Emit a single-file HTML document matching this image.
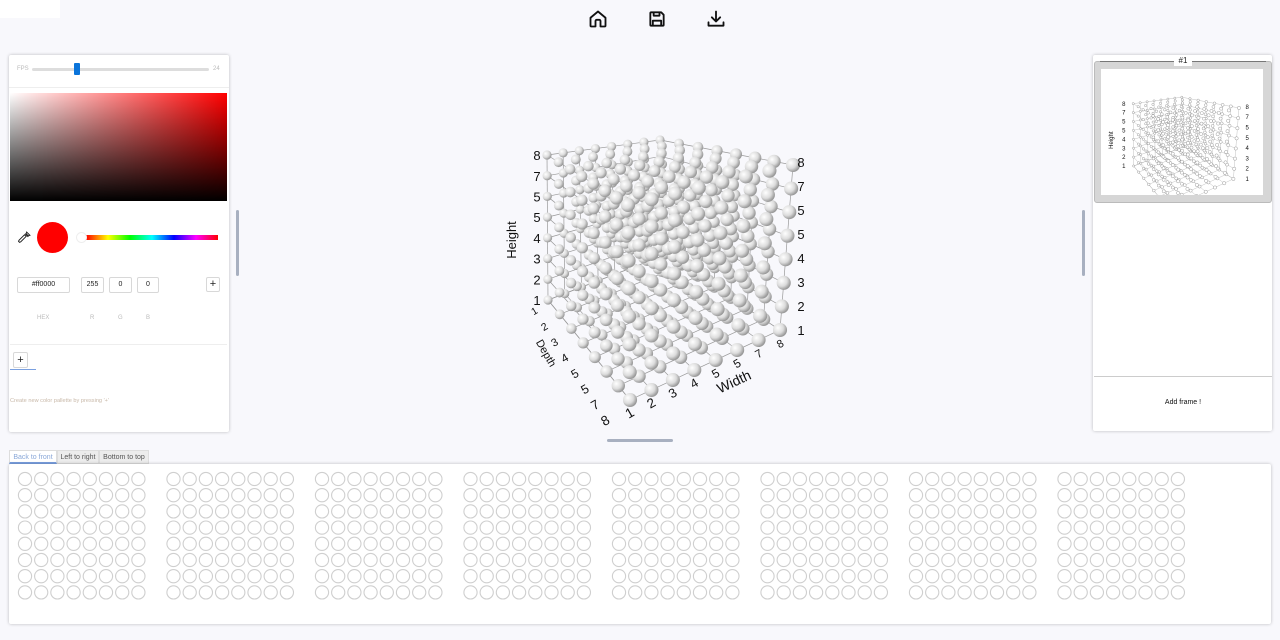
<!DOCTYPE html>
<html><head><meta charset="utf-8">
<style>
*{box-sizing:border-box;margin:0;padding:0}
body{width:1280px;height:640px;background:#f8f8fc;font-family:"Liberation Sans",sans-serif;position:relative;overflow:hidden}
.abs{position:absolute}
.panel{background:#fff;box-shadow:0 0 3px rgba(0,0,0,.25);border-radius:2px}
.inp{position:absolute;border:1px solid #d8d8d8;border-radius:2px;font-size:7px;color:#222;text-align:center;line-height:14px;height:16px;background:#fff}
.lbl{position:absolute;font-size:6px;color:#bbb}
.tab{position:absolute;top:450px;height:14px;font-size:7px;line-height:14px;color:#555;background:#ececec;border:1px solid #ddd;text-align:center}
</style></head><body>
<div class="abs" style="left:0;top:0;width:60px;height:18px;background:#fff"></div>

<svg class="abs" style="left:588px;top:9px" width="20" height="20" viewBox="0 0 24 24" fill="none" stroke="#111" stroke-width="2.2" stroke-linejoin="round"><path d="M3 10.5L12 3l9 7.5V20a1 1 0 0 1-1 1h-5v-6.5a1.5 1.5 0 0 0-1.5-1.5h-3A1.5 1.5 0 0 0 9 14.5V21H4a1 1 0 0 1-1-1z"/></svg>
<svg class="abs" style="left:647px;top:9px" width="20" height="20" viewBox="0 0 24 24" fill="none" stroke="#111" stroke-width="2.2" stroke-linejoin="round"><path d="M4 5a1 1 0 0 1 1-1h12l3 3v12a1 1 0 0 1-1 1H5a1 1 0 0 1-1-1z"/><path d="M8 4v4h7V4M7 20v-6h10v6"/></svg>
<svg class="abs" style="left:706px;top:9px" width="20" height="20" viewBox="0 0 24 24" fill="none" stroke="#111" stroke-width="2.2" stroke-linecap="round" stroke-linejoin="round"><path d="M12 3v12M7 10l5 5 5-5M3 16v4h18v-4"/></svg>

<div class="panel abs" style="left:9px;top:55px;width:220px;height:377px"></div>
<div class="lbl" style="left:17px;top:66px">FPS</div>
<div class="abs" style="left:32px;top:68px;width:177px;height:3px;background:#ddd;border-radius:2px"></div>
<div class="abs" style="left:74px;top:63px;width:6px;height:12px;background:#0a74da;border-radius:1px"></div>
<div class="lbl" style="left:213px;top:66px">24</div>
<div class="abs" style="left:9px;top:87px;width:220px;height:1px;background:#eee"></div>
<div class="abs" style="left:10px;top:93px;width:217px;height:108px;background:linear-gradient(to top,#000,rgba(0,0,0,0)),linear-gradient(to right,#fff,#f00)"></div>
<svg class="abs" style="left:18px;top:231px" width="13" height="13" viewBox="0 0 24 24" fill="none" stroke="#222" stroke-width="1.8"><path d="M3 21l2-1 10-10-3-3L2 17l-1 2zM13 5l6 6M16 2l6 6-3 1-4-4z"/></svg>
<div class="abs" style="left:37px;top:222px;width:31px;height:31px;border-radius:50%;background:#f00"></div>
<div class="abs" style="left:86px;top:235px;width:132px;height:5px;background:linear-gradient(to right,#f00,#ff0,#0f0,#0ff,#00f,#f0f,#f00)"></div>
<div class="abs" style="left:76px;top:232px;width:11px;height:11px;border-radius:50%;background:#fff;border:1px solid #eee"></div>
<div class="inp" style="left:17px;top:277px;width:53px">#ff0000</div>
<div class="inp" style="left:81px;top:277px;width:23px">255</div>
<div class="inp" style="left:109px;top:277px;width:23px">0</div>
<div class="inp" style="left:137px;top:277px;width:22px">0</div>
<div class="inp" style="left:206px;top:277px;width:14px;height:15px;font-size:11px;line-height:13px">+</div>
<div class="lbl" style="left:37px;top:315px">HEX</div>
<div class="lbl" style="left:90px;top:315px">R</div>
<div class="lbl" style="left:118px;top:315px">G</div>
<div class="lbl" style="left:146px;top:315px">B</div>
<div class="abs" style="left:10px;top:344px;width:217px;height:1px;background:#eee"></div>
<div class="inp" style="left:13px;top:352px;width:15px;font-size:11px;line-height:14px">+</div>
<div class="abs" style="left:10px;top:369px;width:26px;height:1px;background:#7aa0e0"></div>
<div class="abs" style="left:10px;top:398px;font-size:5.6px;color:#c8b8a8">Create new color pallette by pressing '+'</div>

<div class="abs" style="left:236px;top:210px;width:3px;height:66px;background:#a8b0c0;border-radius:2px"></div>
<div class="abs" style="left:1082px;top:210px;width:3px;height:66px;background:#a8b0c0;border-radius:2px"></div>
<div class="abs" style="left:607px;top:439px;width:66px;height:3px;background:#a8b0c0;border-radius:2px"></div>

<svg id="plot" class="abs" style="left:0;top:0" width="1280" height="640"></svg>

<div class="panel abs" style="left:1093px;top:55px;width:179px;height:376px"></div>
<div class="abs" style="left:1094px;top:61px;width:178px;height:142px;background:#d6d6d6;border:1px solid #bbb;border-radius:3px"></div>
<div class="abs" style="left:1100px;top:61px;width:166px;height:1px;background:#777"></div>
<div class="abs" style="left:1174px;top:56px;width:18px;height:10px;background:#fff;font-size:8px;text-align:center;line-height:10px;color:#222">#1</div>
<div class="abs" style="left:1101px;top:69px;width:162px;height:126px;background:#fff;overflow:hidden"><svg id="thumb" width="162" height="126"></svg></div>
<div class="abs" style="left:1094px;top:376px;width:178px;height:1px;background:#ccc"></div>
<div class="abs" style="left:1094px;top:399px;width:178px;text-align:center;font-size:7px;color:#111">Add frame !</div>

<div class="tab" style="left:9px;width:48px;background:#fff;color:#8aa8d8;border-bottom:2px solid #7aa0e0">Back to front</div>
<div class="tab" style="left:57px;width:42px">Left to right</div>
<div class="tab" style="left:99px;width:50px">Bottom to top</div>
<div class="panel abs" style="left:9px;top:464px;width:1262px;height:160px"></div>
<svg id="grid" class="abs" style="left:0;top:0" width="1280" height="640"></svg>

<script>
var NS="http://www.w3.org/2000/svg";
function el(p,t,a){var e=document.createElementNS(NS,t);for(var k in a)e.setAttribute(k,a[k]);p.appendChild(e);return e;}
var g=document.getElementById('grid');
for(var gi=0;gi<8;gi++)for(var r=0;r<8;r++)for(var c=0;c<8;c++)
 el(g,'circle',{cx:25+gi*148.5+c*16.2,cy:479+r*16.2,r:6.6,fill:'none',stroke:'#cfcfcf','stroke-width':1.1});

var P=document.getElementById('plot');
var defs=el(P,'defs',{});
var rg=el(defs,'radialGradient',{id:'sg',cx:'35%',cy:'35%',r:'65%'});
el(rg,'stop',{offset:'0','stop-color':'#fff'});
el(rg,'stop',{offset:'0.6','stop-color':'#dcdcdc'});
el(rg,'stop',{offset:'1','stop-color':'#9a9a9a'});
var B={a:[548,300],b:[630,400],c:[780,330],d:[665,255]};
var T={a:[547,155],b:[628,205],c:[793,165],d:[660,140]};
function bil(Q,u,v){
 var x=Q.a[0]*(1-u)*(1-v)+Q.b[0]*(1-u)*v+Q.c[0]*u*v+Q.d[0]*u*(1-v);
 var y=Q.a[1]*(1-u)*(1-v)+Q.b[1]*(1-u)*v+Q.c[1]*u*v+Q.d[1]*u*(1-v);return[x,y];}
function pr(w,d,h){var u=w/7,v=d/7,s=h/7;var b=bil(B,u,v),t=bil(T,u,v);return[b[0]*(1-s)+t[0]*s,b[1]*(1-s)+t[1]*s];}
function ln(p,a,b){el(p,'line',{x1:a[0],y1:a[1],x2:b[0],y2:b[1],stroke:'#999','stroke-width':0.7});}
function grids(p){
 for(var i=0;i<8;i++){
  ln(p,pr(i,0,0),pr(i,7,0));ln(p,pr(0,i,0),pr(7,i,0));
  ln(p,pr(i,0,0),pr(i,0,7));ln(p,pr(0,0,i),pr(7,0,i));
  ln(p,pr(7,i,0),pr(7,i,7));ln(p,pr(7,0,i),pr(7,7,i));
  ln(p,pr(0,0,i),pr(0,7,i));
 }}
function balls(p,f){
 var L=[];for(var w=0;w<8;w++)for(var d=0;d<8;d++)for(var h=0;h<8;h++)L.push([w,d,h]);
 L.sort(function(a,b){return (a[1]-a[0]*0.3)-(b[1]-b[0]*0.3)||a[2]-b[2];});
 L.forEach(function(q){var pt=pr(q[0],q[1],q[2]);var r=(4.6+q[1]*0.35)*f;
  el(p,'circle',{cx:pt[0],cy:pt[1],r:r,fill:f<1?'#fff':'url(#sg)',stroke:f<1?'#888':'none','stroke-width':f<1?1:0});});
}
grids(P);balls(P,1);
function tx(p,x,y,s,t,rot){var e=el(p,'text',{x:x,y:y,'font-size':s,fill:'#111','font-family':'Liberation Sans, sans-serif','text-anchor':'middle'});if(rot)e.setAttribute('transform','rotate('+rot+' '+x+' '+y+')');e.textContent=t;}
var lab=['1','2','3','4','5','5','7','8'];
for(var i=0;i<8;i++){tx(P,537,305-i*20.7,13,lab[i]);tx(P,801,335-i*24,13,lab[i]);}
for(var i=0;i<8;i++){var p=pr(0,i,0);tx(P,p[0]-12-i*1.5,p[1]+14+i*1.5,10+i*0.5,lab[i],-30);}
for(var i=0;i<8;i++){var p=pr(i,7,0);tx(P,p[0]+2,p[1]+17,11+(7-i)*0.4,lab[i],-30);}
tx(P,516,240,13,'Height',-90);
tx(P,543,355,11,'Depth',60);
tx(P,736,386,14,'Width',-25);

var Th=document.getElementById('thumb');
var gT=el(Th,'g',{transform:'translate(-203,-32) scale(0.43)'});
grids(gT);balls(gT,0.55);
for(var i=0;i<8;i++){tx(gT,525,305-i*20.7,14,lab[i]);tx(gT,812,335-i*24,14,lab[i]);}
tx(gT,500,240,14,'Height',-90);
</script>
</body></html>
